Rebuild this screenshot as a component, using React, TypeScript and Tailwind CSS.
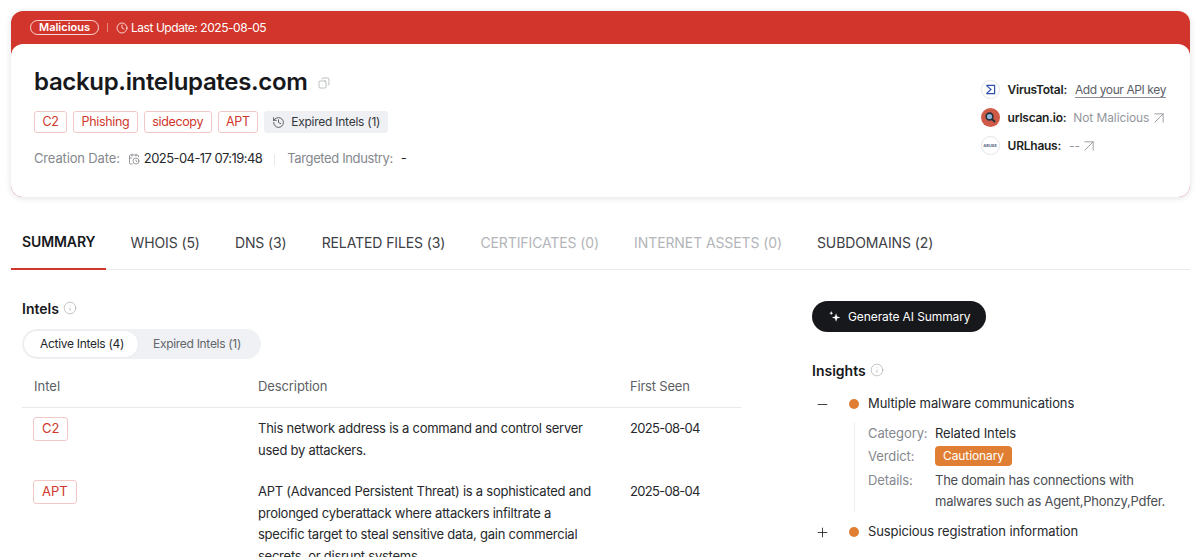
import { Clock, Copy, History, CalendarClock, ArrowUpRight, Info, Minus, Plus } from 'lucide-react';

function Tag({ children, large }: { children: string; large?: boolean }) {
  return (
    <span
      className={
        'inline-flex items-center rounded-[3px] border border-[#f3c9c7] text-[#d0372c] ' +
        (large ? 'h-[24px] px-[8px] text-[13px]' : 'h-[22px] px-[7.5px] text-[12.5px] tracking-[-0.35px]')
      }
    >
      {children}
    </span>
  );
}

function Sources() {
  return (
    <div className="flex flex-col gap-[9px] text-[12px] mt-[13px]">
      <div className="flex items-center h-[19px]">
        <span className="w-[19px] h-[19px] rounded-full border border-[#e3e5ea] flex items-center justify-center mr-[8px]">
          <svg width="11" height="11" viewBox="0 0 12 12" fill="none" stroke="#2f4fb0" strokeWidth="1.3">
            <path d="M1.5 1.5h9v9h-9M1.5 1.5L6.5 6l-5 4.5" />
          </svg>
        </span>
        <span className="font-semibold text-[#1d1f23] tracking-[-0.25px]">VirusTotal:</span>
        <span className="ml-[8px] text-[#5c6066] border-b border-[#8a8d93] leading-[15px] tracking-[-0.4px]">
          Add your API key
        </span>
      </div>
      <div className="flex items-center h-[19px]">
        <span className="w-[19px] h-[19px] rounded-full bg-[#cf5a47] flex items-center justify-center mr-[8px]">
          <svg width="13" height="13" viewBox="0 0 13 13">
            <circle cx="5.5" cy="5.5" r="3.4" fill="#8fb6d8" stroke="#26303c" strokeWidth="1.6" />
            <path d="M8 8l3 3" stroke="#26303c" strokeWidth="2" />
          </svg>
        </span>
        <span className="font-semibold text-[#1d1f23] tracking-[-0.25px]">urlscan.io:</span>
        <span className="ml-[7px] text-[#94979c] tracking-[-0.1px]">Not Malicious</span>
        <ArrowUpRight size={20} strokeWidth={1.1} className="-mr-[8px] text-[#94979c]" />
      </div>
      <div className="flex items-center h-[19px]">
        <span className="w-[19px] h-[19px] rounded-full border border-[#e3e5ea] flex items-center justify-center mr-[8px] text-[4px] font-bold text-[#5a6a85] overflow-hidden">
          ABUSE
        </span>
        <span className="font-semibold text-[#1d1f23] tracking-[-0.25px]">URLhaus:</span>
        <span className="ml-[8px] text-[#94979c]">--</span>
        <ArrowUpRight size={20} strokeWidth={1.1} className="-ml-[1px] text-[#94979c]" />
      </div>
    </div>
  );
}

function Header() {
  return (
    <section className="rounded-[12px] bg-[#d2352b] shadow-[0_1px_6px_rgba(30,40,60,0.14)]">
      <div className="h-[33px] flex items-center pl-[19px] text-white text-[12px]">
        <span className="h-[15px] px-[8px] rounded-full border border-white/80 flex items-center text-[11px] font-semibold">
          Malicious
        </span>
        <span className="w-px h-[9px] bg-white/40 mx-[8px]" />
        <Clock size={12} strokeWidth={1.5} className="mr-[3px]" />
        <span className="tracking-[-0.45px]">Last Update: 2025-08-05</span>
      </div>
      <div className="h-[153px] bg-white rounded-[12px] pl-[23px] pr-[24px] pt-[23px] flex justify-between">
        <div>
          <div className="flex items-center h-[30px]">
            <h1 className="text-[24px] font-semibold text-[#17181b] tracking-[-0.33px]">backup.intelupates.com</h1>
            <Copy size={12} strokeWidth={1.3} className="ml-[10px] mt-[2px] text-[#9a9da3] -scale-x-100" />
          </div>
          <div className="flex items-center gap-[6px] mt-[14px]">
            <Tag>C2</Tag>
            <Tag>Phishing</Tag>
            <Tag>sidecopy</Tag>
            <Tag>APT</Tag>
            <span className="h-[22px] px-[8px] rounded-[3px] bg-[#eff0f4] flex items-center text-[12px] text-[#33363b] tracking-[-0.25px]">
              <History size={13} strokeWidth={1.4} className="mr-[6px]" />
              Expired Intels (1)
            </span>
          </div>
          <div className="flex items-center mt-[16px] text-[13px] h-[20px]">
            <span className="text-[#85888e] tracking-[-0.15px]">Creation Date:</span>
            <CalendarClock size={12} strokeWidth={1.3} className="ml-[8px] mr-[4px] text-[#6a6d73]" />
            <span className="text-[#26282c] tracking-[-0.55px]">2025-04-17 07:19:48</span>
            <span className="w-px h-[11px] bg-[#e7e8eb] mx-[12px]" />
            <span className="text-[#85888e] tracking-[-0.38px]">Targeted Industry:</span>
            <span className="ml-[8px] text-[#26282c]">-</span>
          </div>
        </div>
        <Sources />
      </div>
    </section>
  );
}

function Tabs() {
  const items = [
    { label: 'SUMMARY', active: true },
    { label: 'WHOIS (5)' },
    { label: 'DNS (3)' },
    { label: 'RELATED FILES (3)' },
    { label: 'CERTIFICATES (0)', off: true },
    { label: 'INTERNET ASSETS (0)', off: true },
    { label: 'SUBDOMAINS (2)' },
  ];
  return (
    <nav className="mt-[20px] h-[53px] border-b border-[#e8e9ec] flex text-[14px] tracking-[-0.1px]">
      {items.map(it => (
        <div
          key={it.label}
          className={
            'px-[11px] mr-[13px] h-[53px] pb-[3px] flex items-center ' +
            (it.active
              ? 'font-semibold text-[#17181b] border-b-2 border-[#d2352b]'
              : it.off
                ? 'text-[#b3b5b9]'
                : 'text-[#3d4045]')
          }
        >
          {it.label}
        </div>
      ))}
    </nav>
  );
}

function IntelRow({ tag, first, children }: { tag: string; first: string; children: React.ReactNode }) {
  return (
    <div className="flex pb-[18px] text-[13px] leading-[21.5px] text-[#26282c]">
      <div className="w-[236px] pl-[11px] pt-[1px]">
        <Tag large>{tag}</Tag>
      </div>
      <div className="w-[372px] pt-[2px]">
        <p className="w-[338px] tracking-[-0.25px]">{children}</p>
      </div>
      <div className="pt-[2px] tracking-[-0.7px]">{first}</div>
    </div>
  );
}

function Intels() {
  return (
    <div className="w-[719px]">
      <div className="flex items-center h-[18px] -mt-[2px] text-[14px] font-semibold text-[#17181b]">
        Intels
        <Info size={14} strokeWidth={1} className="ml-[4px] text-[#9a9da3]" />
      </div>
      <div className="mt-[12px] inline-flex h-[30px] rounded-full bg-[#f0f1f4] p-[2px] text-[12px] tracking-[-0.3px]">
        <span className="pl-[16px] pr-[14px] rounded-full bg-white flex items-center text-[#26282c] shadow-[0_0_2px_rgba(0,0,0,0.08)]">
          Active Intels (4)
        </span>
        <span className="pl-[15px] pr-[18px] flex items-center text-[#62656b]">Expired Intels (1)</span>
      </div>
      <div className="mt-[7px] h-[42px] border-b border-[#e8e9ec] flex items-center text-[13px] text-[#5c5f65]">
        <div className="w-[236px] pl-[12px]">Intel</div>
        <div className="w-[372px] tracking-[-0.1px]">Description</div>
        <div className="tracking-[-0.2px]">First Seen</div>
      </div>
      <div className="mt-[8px]">
        <IntelRow tag="C2" first="2025-08-04">
          This network address is a command and control server used by attackers.
        </IntelRow>
        <IntelRow tag="APT" first="2025-08-04">
          APT (Advanced Persistent Threat) is a sophisticated and prolonged cyberattack where attackers infiltrate a
          specific target to steal sensitive data, gain commercial secrets, or disrupt systems.
        </IntelRow>
      </div>
    </div>
  );
}

function Insights() {
  return (
    <div className="ml-[71px] flex-1">
      <button className="mt-[0px] h-[31px] px-[16px] rounded-full bg-[#17181b] text-white text-[12px] flex items-center tracking-[-0.1px]">
        <svg width="14" height="14" viewBox="0 0 13 13" fill="white" className="mr-[6px]">
          <path d="M7.5 3l1 3 3 1-3 1-1 3-1-3-3-1 3-1zM3 1l.5 1.3L4.8 3l-1.3.5L3 4.8l-.5-1.3L1.2 3l1.3-.7z" />
        </svg>
        Generate AI Summary
      </button>
      <div className="mt-[29px] flex items-center h-[18px] text-[14px] font-semibold text-[#17181b]">
        Insights
        <Info size={14} strokeWidth={1} className="ml-[4px] text-[#9a9da3]" />
      </div>
      <div className="mt-[15px] ml-[3px] flex items-center h-[20px] text-[13px] text-[#26282c] tracking-[-0.1px]">
        <Minus size={15} strokeWidth={1.4} className="mr-[19px]" />
        <span className="w-[10px] h-[10px] rounded-full bg-[#e07f33] mr-[9px]" />
        Multiple malware communications
      </div>
      <div className="ml-[42px] mt-[8px] pl-[13px] border-l border-[#eeeff1] text-[13px] tracking-[-0.1px]">
        <div className="flex h-[23px] items-center">
          <span className="w-[67px] text-[#85888e]">Category:</span>
          <span className="text-[#26282c]">Related Intels</span>
        </div>
        <div className="flex h-[23px] items-center">
          <span className="w-[67px] text-[#85888e]">Verdict:</span>
          <span className="h-[20px] px-[8px] -mt-[1px] rounded-[4px] bg-[#e07f33] text-white text-[12px] flex items-center">
            Cautionary
          </span>
        </div>
        <div className="flex leading-[21px] pt-[2px]">
          <span className="w-[67px] text-[#85888e]">Details:</span>
          <span className="w-[240px] text-[#4a4d52] tracking-[-0.25px]">
            The domain has connections with malwares such as Agent,Phonzy,Pdfer.
          </span>
        </div>
      </div>
      <div className="mt-[10px] ml-[3px] flex items-center h-[20px] text-[13px] text-[#26282c] tracking-[-0.1px]">
        <Plus size={15} strokeWidth={1.4} className="mr-[19px]" />
        <span className="w-[10px] h-[10px] rounded-full bg-[#e07f33] mr-[9px]" />
        Suspicious registration information
      </div>
    </div>
  );
}

export default function App() {
  return (
    <div className="h-[557px] overflow-hidden bg-white pl-[11px] pt-[11px] pr-[10px] font-['Inter',sans-serif]">
      <Header />
      <Tabs />
      <div className="flex pl-[11px] pt-[31px]">
        <Intels />
        <Insights />
      </div>
    </div>
  );
}
